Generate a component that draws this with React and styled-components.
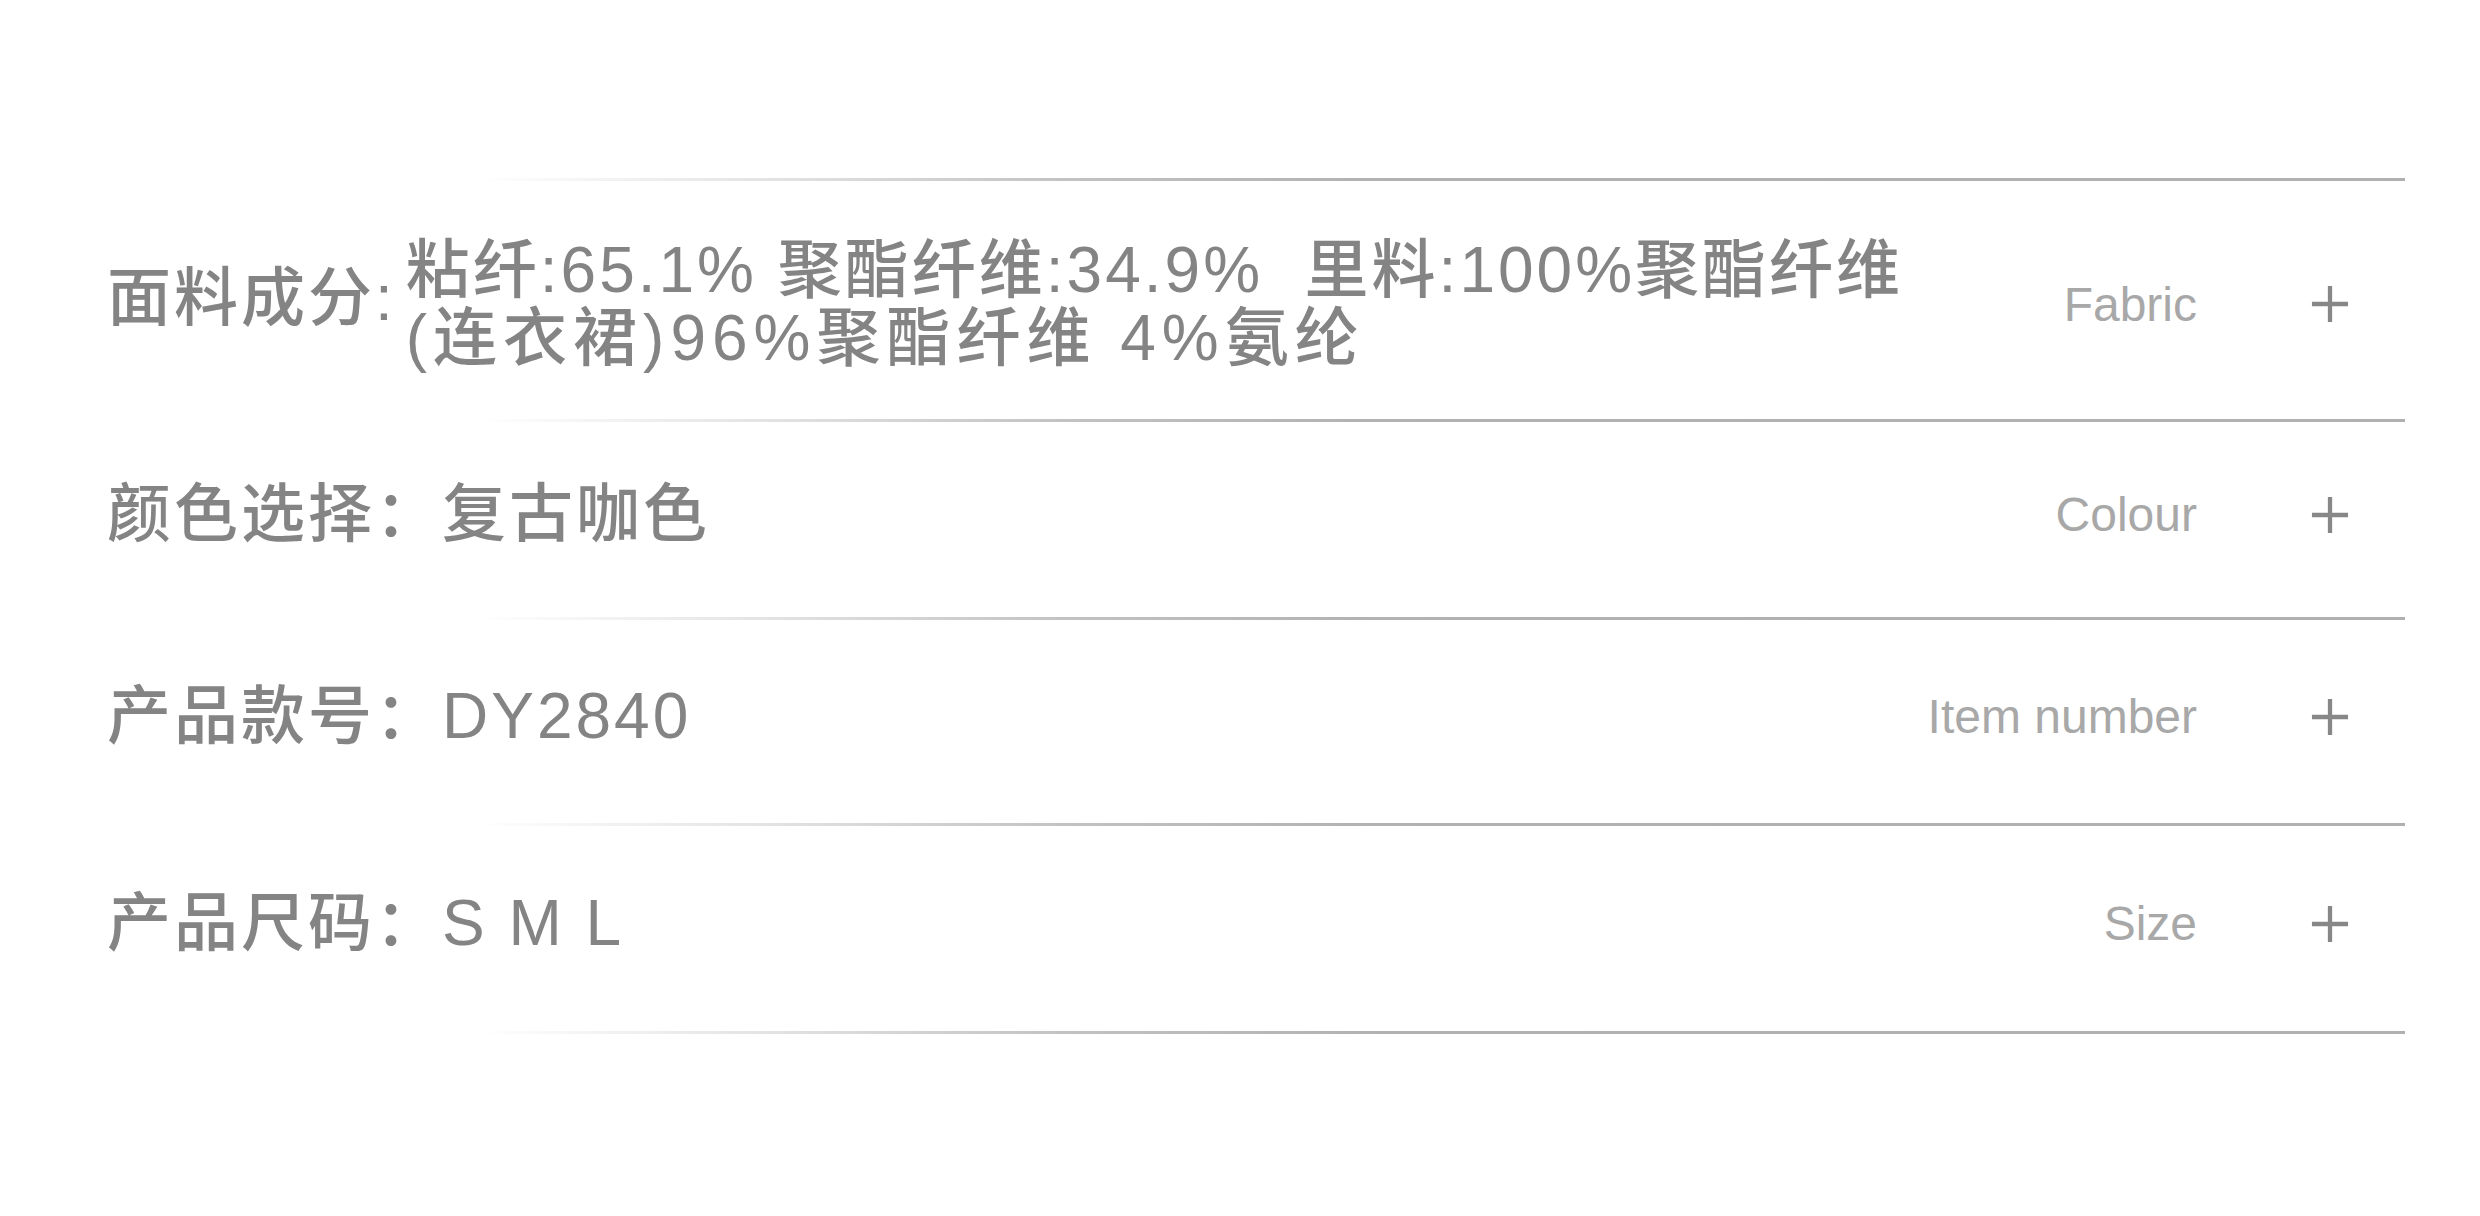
import React from "react";
import styled, { createGlobalStyle } from "styled-components";

const GlobalStyle = createGlobalStyle`
  html, body {
    margin: 0;
    padding: 0;
    background: #fff;
  }
  body {
    font-family: "Liberation Sans", "Noto Sans CJK SC", sans-serif;
  }
`;

const rows = [
  {
    label: "面料成分:",
    value: ["粘纤:65.1% 聚酯纤维:34.9%  里料:100%聚酯纤维", "(连衣裙)96%聚酯纤维 4%氨纶"],
    en: "Fabric",
    compact: true,
    height: 238,
  },
  { label: "颜色选择：", value: ["复古咖色"], en: "Colour", height: 195 },
  { label: "产品款号：", value: ["DY2840"], en: "Item number", height: 203 },
  { label: "产品尺码：", value: ["S M L"], en: "Size", height: 205 },
];

export default function App() {
  return (
    <Page>
      <GlobalStyle />
      <List>
        <Divider />
        {rows.map((row) => (
          <React.Fragment key={row.en}>
            <Row $height={row.height} $compact={row.compact}>
              <Main>
                <Label $compact={row.compact}>{row.label}</Label>
                <Value $compact={row.compact}>
                  {row.value.map((line, i) => (
                    <Line key={i} $spaced={row.compact && i === 1}>
                      {line}
                    </Line>
                  ))}
                </Value>
              </Main>
              <EnLabel>{row.en}</EnLabel>
              <Plus viewBox="0 0 40 40">
                <path d="M20 1 V39 M1 20 H39" />
              </Plus>
            </Row>
            <Divider />
          </React.Fragment>
        ))}
      </List>
    </Page>
  );
}

const Page = styled.div`
  width: 2480px;
  height: 1216px;
  background: #fff;
  padding: 178px 0 0 107px;
  box-sizing: border-box;
`;

const List = styled.div`
  width: 2298px;
  display: flex;
  flex-direction: column;
`;

const Divider = styled.div`
  height: 3px;
  background: linear-gradient(
    to right,
    rgba(180, 180, 180, 0) 0%,
    rgba(180, 180, 180, 0) 16%,
    rgba(180, 180, 180, 0.35) 28%,
    rgba(178, 178, 178, 0.8) 42%,
    #b2b2b2 55%,
    #b0b0b0 100%
  );
`;

const Row = styled.div`
  display: flex;
  align-items: center;
  height: ${(p) => p.$height}px;
  padding: ${(p) => (p.$compact ? "8px 56px 0 0" : "0 56px 10px 0")};
  box-sizing: border-box;
`;

const Main = styled.div`
  flex: 1;
  display: flex;
  align-items: center;
  color: #848484;
  font-size: 64px;
  font-weight: 500;
  letter-spacing: 3px;
`;

const Label = styled.div`
  line-height: 1.2;
  white-space: nowrap;
  margin-right: ${(p) => (p.$compact ? "10px" : "0")};
  margin-top: ${(p) => (p.$compact ? "-12px" : "0")};
`;

const Value = styled.div`
  line-height: ${(p) => (p.$compact ? "68px" : "1.2")};
  display: flex;
  flex-direction: column;
`;

const Line = styled.span`
  white-space: pre;
  letter-spacing: ${(p) => (p.$spaced ? "6px" : "3px")};
`;

const EnLabel = styled.div`
  font-family: "Liberation Sans", Arial, sans-serif;
  font-size: 48px;
  color: #a8a8a8;
  white-space: nowrap;
  margin-right: 114px;
`;

const Plus = styled.svg`
  width: 38px;
  height: 38px;
  flex: none;
  fill: none;
  stroke: #878787;
  stroke-width: 4.5;
`;
